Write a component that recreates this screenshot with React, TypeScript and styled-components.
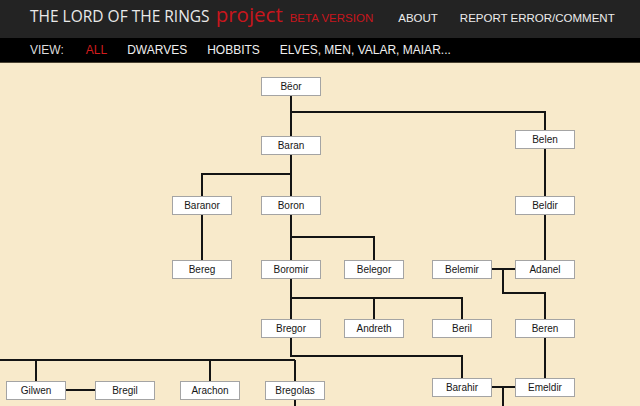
import React from "react";
import styled, { createGlobalStyle } from "styled-components";

const GlobalStyle = createGlobalStyle`
  html, body {
    margin: 0;
    padding: 0;
    background: #f8eacb;
  }
  body {
    font-family: "Liberation Sans", Arial, sans-serif;
  }
`;

const Page = styled.div`
  width: 640px;
  height: 406px;
  display: flex;
  flex-direction: column;
  overflow: hidden;
`;

const TopBar = styled.header`
  height: 38px;
  flex: none;
  box-sizing: border-box;
  padding: 0 0 0 30px;
  background: #232323;
  display: flex;
  align-items: baseline;
  line-height: 1;
  padding-top: 4px;
`;

const Title = styled.span`
  font-family: "Open Sans", "Liberation Sans", sans-serif;
  font-size: 15.5px;
  color: #e9e9e9;
  white-space: nowrap;
`;

const Project = styled.span`
  font-family: "Open Sans", "Liberation Sans", sans-serif;
  font-weight: 400;
  font-size: 20.5px;
  color: #c8161d;
  margin-left: 6px;
`;

const Beta = styled.span`
  font-size: 11.5px;
  color: #c8161d;
  margin-left: 7px;
  white-space: nowrap;
`;

const TopLink = styled.a`
  font-size: 11.5px;
  color: #ececec;
  margin-left: ${(p: { $gap: number }) => p.$gap}px;
  white-space: nowrap;
  text-decoration: none;
`;

const ViewBar = styled.nav`
  height: 25px;
  flex: none;
  box-sizing: border-box;
  background: #000;
  border-bottom: 1px solid #4a4333;
  padding: 0 0 0 30px;
  display: flex;
  align-items: center;
  gap: 20px;
  font-size: 12px;
`;

const ViewItem = styled.span<{ $active?: boolean; $label?: boolean }>`
  color: ${(p) => (p.$active ? "#d21d1d" : p.$label ? "#dcdcdc" : "#efefef")};
  white-space: nowrap;
  margin-right: ${(p) => (p.$label ? "2px" : "0")};
`;

const Canvas = styled.main`
  position: relative;
  flex: 1;
  background: #f8eacb;
  overflow: hidden;
`;

const Lines = styled.svg`
  position: absolute;
  left: 0;
  top: 0;
`;

const Person = styled.div`
  position: absolute;
  width: 60px;
  height: 19px;
  box-sizing: border-box;
  background: #fff;
  border: 1px solid #a4a4a4;
  font-size: 10px;
  line-height: 17px;
  text-align: center;
  color: #161616;
  white-space: nowrap;
`;

// canvas starts below the two bars
const TOP = 63;

const people: [string, number, number][] = [
  ["Bëor", 261, 77],
  ["Baran", 261, 136],
  ["Belen", 515, 130],
  ["Baranor", 172, 196],
  ["Boron", 261, 196],
  ["Beldir", 515, 196],
  ["Bereg", 172, 260],
  ["Boromir", 261, 260],
  ["Belegor", 344, 260],
  ["Belemir", 432, 260],
  ["Adanel", 515, 260],
  ["Bregor", 261, 319],
  ["Andreth", 344, 319],
  ["Beril", 432, 319],
  ["Beren", 515, 319],
  ["Gilwen", 6, 381],
  ["Bregil", 95, 381],
  ["Arachon", 180, 381],
  ["Bregolas", 265, 381],
  ["Barahir", 432, 378],
  ["Emeldir", 515, 378],
];

const links: number[][] = [
  [291, 95, 291, 136],
  [291, 112, 545, 112, 545, 130],
  [291, 154, 291, 196],
  [291, 174, 202, 174, 202, 196],
  [202, 214, 202, 260],
  [291, 214, 291, 260],
  [291, 237, 374, 237, 374, 260],
  [545, 148, 545, 196],
  [545, 214, 545, 260],
  [492, 269, 515, 269],
  [503, 269, 503, 293, 545, 293, 545, 319],
  [291, 278, 291, 319],
  [291, 298, 462, 298, 462, 319],
  [374, 298, 374, 319],
  [545, 337, 545, 378],
  [291, 337, 291, 356, 462, 356, 462, 378],
  [0, 360, 295, 360],
  [36, 360, 36, 381],
  [210, 360, 210, 381],
  [295, 360, 295, 381],
  [66, 390, 95, 390],
  [295, 399, 295, 412],
  [492, 387, 515, 387],
  [503, 387, 503, 412],
];

const FamilyTree = () => (
  <Canvas>
    <Lines width={640} height={350}>
      <g transform={`translate(0,${-TOP})`} fill="none" stroke="#141414" strokeWidth={2} shapeRendering="crispEdges">
        {links.map((l, i) => (
          <polyline key={i} points={l.join(" ")} />
        ))}
      </g>
    </Lines>
    {people.map(([name, x, y]) => (
      <Person key={name} style={{ left: x, top: y - TOP }}>
        {name}
      </Person>
    ))}
  </Canvas>
);

export default function App() {
  return (
    <Page>
      <GlobalStyle />
      <TopBar>
        <Title>THE LORD OF THE RINGS</Title>
        <Project>project</Project>
        <Beta>BETA VERSION</Beta>
        <TopLink $gap={25}>ABOUT</TopLink>
        <TopLink $gap={22}>REPORT ERROR/COMMENT</TopLink>
      </TopBar>
      <ViewBar>
        <ViewItem $label>VIEW:</ViewItem>
        <ViewItem $active>ALL</ViewItem>
        <ViewItem>DWARVES</ViewItem>
        <ViewItem>HOBBITS</ViewItem>
        <ViewItem>ELVES, MEN, VALAR, MAIAR...</ViewItem>
      </ViewBar>
      <FamilyTree />
    </Page>
  );
}
